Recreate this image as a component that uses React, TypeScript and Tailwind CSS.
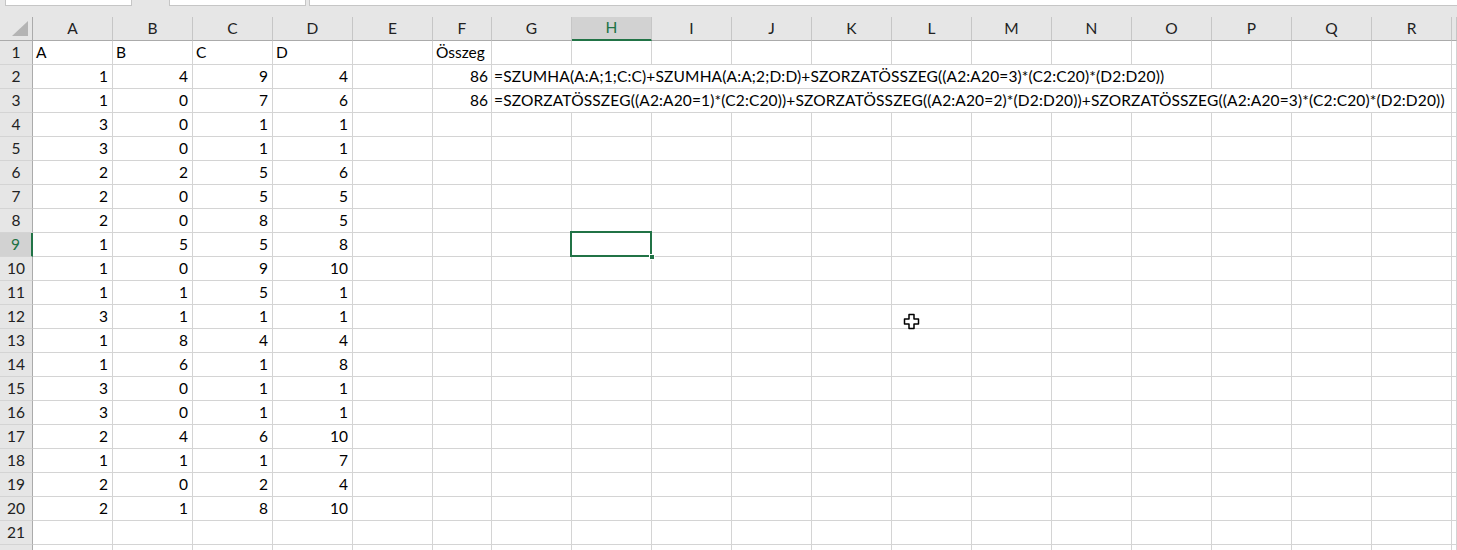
import React from "react";

const COLS = ["A", "B", "C", "D", "E", "F", "G", "H", "I", "J", "K", "L", "M", "N", "O", "P", "Q", "R", "S"];

const DATA: (string | number)[][] = [
  ["A", "B", "C", "D"],
  [1, 4, 9, 4],
  [1, 0, 7, 6],
  [3, 0, 1, 1],
  [3, 0, 1, 1],
  [2, 2, 5, 6],
  [2, 0, 5, 5],
  [2, 0, 8, 5],
  [1, 5, 5, 8],
  [1, 0, 9, 10],
  [1, 1, 5, 1],
  [3, 1, 1, 1],
  [1, 8, 4, 4],
  [1, 6, 1, 8],
  [3, 0, 1, 1],
  [3, 0, 1, 1],
  [2, 4, 6, 10],
  [1, 1, 1, 7],
  [2, 0, 2, 4],
  [2, 1, 8, 10],
  [],
  [],
];

const FORMULAS: Record<number, { value: string; text: string; span: number }> = {
  2: {
    value: "86",
    text: "=SZUMHA(A:A;1;C:C)+SZUMHA(A:A;2;D:D)+SZORZATÖSSZEG((A2:A20=3)*(C2:C20)*(D2:D20))",
    span: 9,
  },
  3: {
    value: "86",
    text: "=SZORZATÖSSZEG((A2:A20=1)*(C2:C20))+SZORZATÖSSZEG((A2:A20=2)*(D2:D20))+SZORZATÖSSZEG((A2:A20=3)*(C2:C20)*(D2:D20))",
    span: 12,
  },
};

const gridCols = "grid grid-cols-[33px_repeat(5,80px)_59px_repeat(12,80px)_1fr]";
const cellBase = "h-[24px] border-r border-b border-[#d4d4d4] bg-white flex items-center overflow-visible whitespace-nowrap";

function RowHeader({ n }: { n: number }) {
  const selected = n === 9;
  return (
    <div
      className={
        "h-[24px] flex items-center justify-center border-b border-[#d4d4d4] " +
        (selected
          ? "bg-[#d2d2d2] text-[#217346] border-r-2 border-r-[#217346]"
          : "bg-[#e6e6e6] text-[#222] border-r border-r-[#ababab]")
      }
    >
      {n <= 21 ? n : ""}
    </div>
  );
}

function SelectedCell() {
  return (
    <div className={cellBase + " relative"}>
      <div className="absolute -left-[2px] -top-[2px] right-[-1px] bottom-[-1px] border-2 border-[#217346] pointer-events-none" />
      <div className="absolute right-[-4px] bottom-[-4px] w-[6px] h-[6px] bg-[#217346] border border-white" />
    </div>
  );
}

function DataRow({ n }: { n: number }) {
  const values = DATA[n - 1] || [];
  const formula = FORMULAS[n];
  const cells: React.ReactNode[] = [];

  for (let c = 0; c < 5; c++) {
    const v = values[c];
    const numeric = typeof v === "number";
    cells.push(
      <div key={c} className={cellBase + (numeric ? " justify-end pr-[4px]" : " pl-[3px]")}>
        {v !== undefined ? String(v) : ""}
      </div>,
    );
  }

  // F
  if (n === 1) {
    cells.push(
      <div key="F" className={cellBase + " pl-[3px]"}>
        Összeg
      </div>,
    );
  } else if (formula) {
    cells.push(
      <div key="F" className={cellBase + " justify-end pr-[3px]"}>
        {formula.value}
      </div>,
    );
  } else {
    cells.push(<div key="F" className={cellBase} />);
  }

  // G..S
  if (formula) {
    cells.push(
      <div
        key="G"
        className={
          cellBase +
          " pl-[2px] tracking-[0.15px] " +
          (formula.span === 9 ? "col-span-9" : "col-span-12")
        }
      >
        {formula.text}
      </div>,
    );
    for (let c = 6 + formula.span; c < COLS.length; c++) {
      cells.push(<div key={c} className={cellBase} />);
    }
  } else {
    for (let c = 6; c < COLS.length; c++) {
      if (n === 9 && COLS[c] === "H") {
        cells.push(<SelectedCell key={c} />);
      } else {
        cells.push(<div key={c} className={cellBase} />);
      }
    }
  }

  return (
    <>
      <RowHeader n={n} />
      {cells}
    </>
  );
}

function MoveCursor() {
  return (
    <svg
      className="absolute left-[903px] top-[313px] pointer-events-none"
      width="17"
      height="17"
      viewBox="0 0 17 17"
    >
      <path
        d="M6 1.5h5v4.5h4.5v5H11v4.5H6V11H1.5V6H6z"
        fill="#fff"
        stroke="#000"
        strokeWidth="1.5"
        strokeLinejoin="round"
      />
    </svg>
  );
}

export default function App() {
  const rows = Array.from({ length: 22 }, (_, i) => i + 1);
  return (
    <div className="relative w-[1457px] h-[550px] overflow-hidden bg-[#e6e6e6] font-['Lato','Noto_Sans',sans-serif] text-[15.5px] text-black select-none">
      {/* formula bar remnants */}
      <div className="h-[17px] flex items-start pl-[5px]">
        <div className="w-[127px] h-[6px] bg-white border-x border-b border-[#c6c6c6]" />
        <div className="ml-[37px] w-[137px] h-[6px] bg-white border-x border-b border-[#c6c6c6]" />
        <div className="ml-[3px] flex-1 h-[6px] bg-white border-l border-b border-[#c6c6c6]" />
      </div>

      {/* column headers */}
      <div className={gridCols}>
        <div className="h-[24px] flex items-end justify-end pr-[3px] pb-[3px] border-r border-b border-r-[#ababab] border-b-[#ababab] bg-[#e6e6e6]">
          <svg width="17" height="16" viewBox="0 0 17 16">
            <path d="M16 0V15H0z" fill="#b4b4b4" />
          </svg>
        </div>
        {COLS.map((c) =>
          c === "H" ? (
            <div
              key={c}
              className="h-[24px] flex items-center justify-center bg-[#d2d2d2] text-[#217346] border-r border-r-[#c6c6c6] border-b-2 border-b-[#217346]"
            >
              {c}
            </div>
          ) : (
            <div
              key={c}
              className="h-[24px] flex items-center justify-center bg-[#e6e6e6] text-[#222] border-r border-r-[#c6c6c6] border-b border-b-[#ababab]"
            >
              {c === "S" ? "" : c}
            </div>
          ),
        )}
      </div>

      {/* sheet */}
      <div className={gridCols}>
        {rows.map((n) => (
          <DataRow key={n} n={n} />
        ))}
      </div>

      <MoveCursor />
    </div>
  );
}
